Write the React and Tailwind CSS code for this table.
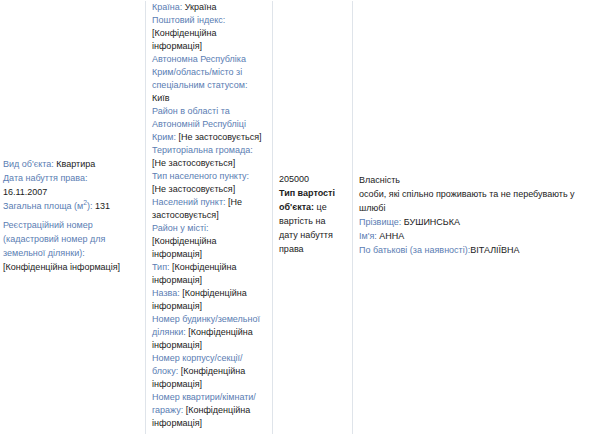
import React from "react";

const L = ({ children }) => <span className="text-[#5a7db3]">{children}</span>;

export default function App() {
  const ff = { fontFamily: '"Liberation Sans", Arial, sans-serif' };
  return (
    <div className="w-[614px] h-[435px] overflow-hidden bg-white text-[9px] text-[#1b1b1b]" style={ff}>
      <div className="flex items-stretch w-[614px] pt-[1px]">
        {/* col1 */}
        <div className="w-[145px] shrink-0 flex flex-col justify-center pl-[3px] pr-[17px] leading-[14px] pb-[5px]">
          <div><L>Вид об'єкта:</L> Квартира</div>
          <div><L>Дата набуття права:</L> 16.11.2007</div>
          <div><L>Загальна площа (м<sup>2</sup>):</L> 131</div>
          <div className="mt-[5px]"><L>Реєстраційний номер (кадастровий номер для земельної ділянки):</L> [Конфіденційна інформація]</div>
        </div>
        {/* col2 */}
        <div className="w-[127px] shrink-0 border-l border-[#dfe4ea] pl-[6px] pr-[9px] leading-[13px] pb-[4px]">
          <div><L>Країна:</L> Україна</div>
          <div><L>Поштовий індекс:</L> [Конфіденційна інформація]</div>
          <div><L>Автономна Республіка Крим/область/місто зі спеціальним статусом:</L> Київ</div>
          <div><L>Район в області та Автономній Республіці Крим:</L> [Не застосовується]</div>
          <div><L>Територіальна громада:</L> [Не застосовується]</div>
          <div><L>Тип населеного пункту:</L> [Не застосовується]</div>
          <div><L>Населений пункт:</L> [Не застосовується]</div>
          <div><L>Район у місті:</L> [Конфіденційна інформація]</div>
          <div><L>Тип:</L> [Конфіденційна інформація]</div>
          <div><L>Назва:</L> [Конфіденційна інформація]</div>
          <div><L>Номер будинку/земельної ділянки:</L> [Конфіденційна інформація]</div>
          <div><L>Номер корпусу/секції/ блоку:</L> [Конфіденційна інформація]</div>
          <div><L>Номер квартири/кімнати/ гаражу:</L> [Конфіденційна інформація]</div>
        </div>
        {/* col3 */}
        <div className="w-[80px] shrink-0 border-l border-[#dfe4ea] pl-[6px] pr-[13px] flex flex-col justify-center leading-[14px] pb-[8px]">
          <div>205000</div>
          <div><span className="font-bold">Тип вартості об'єкта:</span> це вартість на дату набуття права</div>
        </div>
        {/* col4 */}
        <div className="w-[262px] shrink-0 border-l border-[#dfe4ea] pl-[6px] pr-[20px] flex flex-col justify-center leading-[14px] pb-[6px]">
          <div>Власність</div>
          <div>особи, які спільно проживають та не перебувають у шлюбі</div>
          <div><L>Прізвище:</L> БУШИНСЬКА</div>
          <div><L>Ім'я:</L> АННА</div>
          <div><L>По батькові (за наявності):</L>ВІТАЛІЇВНА</div>
        </div>
      </div>
    </div>
  );
}
